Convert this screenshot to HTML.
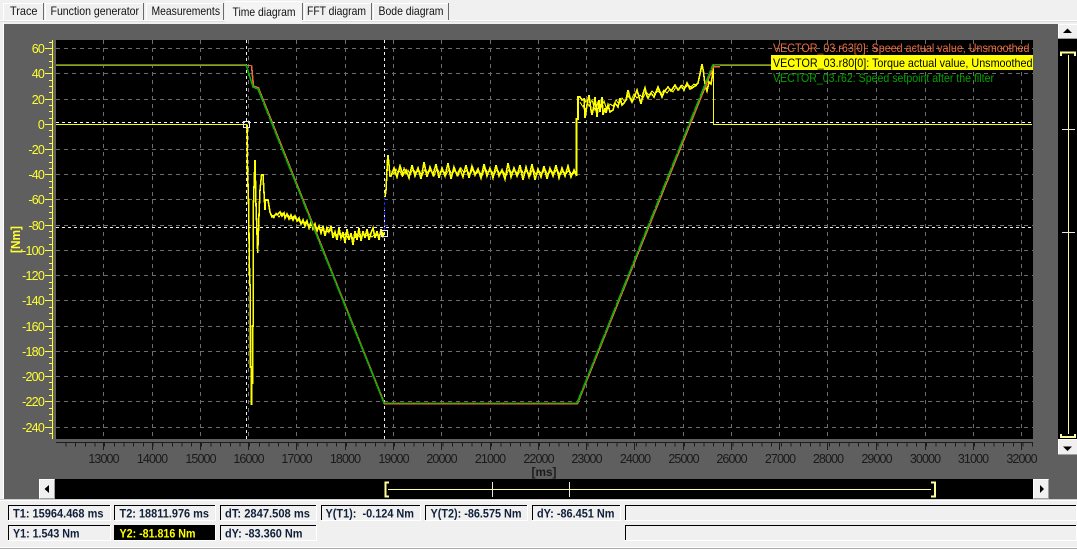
<!DOCTYPE html>
<html>
<head>
<meta charset="utf-8">
<style>
html,body{margin:0;padding:0;background:#f0f0f0;width:1077px;height:549px;overflow:hidden}
svg{display:block}
text{font-family:"Liberation Sans",sans-serif}
.tab{font-size:12px;fill:#111}
.yl{font-size:12.5px;fill:#ffff33;text-anchor:end;letter-spacing:-.8px}
.xl{font-size:12.5px;fill:#1a1a1a;text-anchor:middle;letter-spacing:-.9px}
.st{font-size:12px;font-weight:bold;fill:#10203a}
.lg{font-size:12px}
</style>
</head>
<body>
<svg width="1077" height="549" viewBox="0 0 1077 549" xmlns="http://www.w3.org/2000/svg">
<rect width="1077" height="549" fill="#f0f0f0"/>

<!-- tabs -->
<g shape-rendering="crispEdges">
<rect x="0" y="20" width="1077" height="1" fill="#ffffff"/>
<rect x="0" y="21" width="1077" height="1" fill="#dcdcdc"/>
<rect x="3" y="22" width="1" height="477" fill="#ffffff"/>
<path d="M43.5 3V20 M143.5 3V20 M223.5 3V20 M302.5 3V20 M371.5 3V20 M448.5 3V20" stroke="#6a6a6a" stroke-width="1.4"/>
<path d="M3.5 20V3.5H43 M45.5 20V3.5H143 M146.5 20V3.5H223 M304.5 20V3.5H371 M373.5 20V3.5H448" stroke="#ffffff" fill="none"/>
<rect x="225" y="1" width="77" height="21" fill="#f4f4f4"/>
<rect x="225" y="1" width="77" height="1" fill="#ffffff"/>
</g>
<text class="tab" x="10" y="15" textLength="27.5" lengthAdjust="spacingAndGlyphs">Trace</text>
<text class="tab" x="50.5" y="15" textLength="88.5" lengthAdjust="spacingAndGlyphs">Function generator</text>
<text class="tab" x="151.5" y="15" textLength="68.5" lengthAdjust="spacingAndGlyphs">Measurements</text>
<text class="tab" x="232.5" y="16" textLength="63" lengthAdjust="spacingAndGlyphs">Time diagram</text>
<text class="tab" x="307" y="15" textLength="59" lengthAdjust="spacingAndGlyphs">FFT diagram</text>
<text class="tab" x="378.5" y="15" textLength="65" lengthAdjust="spacingAndGlyphs">Bode diagram</text>

<!-- gray surface -->
<rect x="4" y="24" width="1054" height="475" fill="#5f5f5f" shape-rendering="crispEdges"/>
<rect x="1058" y="455" width="19" height="44" fill="#5f5f5f" shape-rendering="crispEdges"/>
<rect x="0" y="499" width="1077" height="1" fill="#cfcfcf" shape-rendering="crispEdges"/>
<rect x="0" y="500" width="1077" height="1" fill="#ffffff" shape-rendering="crispEdges"/>
<rect x="0" y="548" width="1077" height="1" fill="#a8a8a8" shape-rendering="crispEdges"/>
<rect x="0" y="547" width="1077" height="1" fill="#ffffff" shape-rendering="crispEdges"/>

<!-- plot -->
<rect x="56" y="40" width="977" height="399" fill="#000" shape-rendering="crispEdges"/>
<g shape-rendering="crispEdges" fill="none">
<path stroke="#6e6e6e" stroke-width="1" stroke-dasharray="4 4" d="M103.5 40V439M152.5 40V439M200.5 40V439M248.5 40V439M296.5 40V439M345.5 40V439M393.5 40V439M441.5 40V439M490.5 40V439M538.5 40V439M586.5 40V439M634.5 40V439M683.5 40V439M731.5 40V439M779.5 40V439M827.5 40V439M876.5 40V439M925.5 40V439M973.5 40V439M1021.5 40V439"/>
<path stroke="#6e6e6e" stroke-width="1" stroke-dasharray="4 4" d="M56 48.5H1033M56 73.5H1033M56 99.5H1033M56 149.5H1033M56 174.5H1033M56 199.5H1033M56 225.5H1033M56 250.5H1033M56 275.5H1033M56 300.5H1033M56 326.5H1033M56 351.5H1033M56 376.5H1033M56 401.5H1033M56 427.5H1033"/>
</g>

<!-- cursors -->
<g shape-rendering="crispEdges" fill="none" stroke="#f2f2f2" stroke-width="1" stroke-dasharray="3 3">
<path d="M246.5 40V439"/>
<path d="M384.5 40V439"/>
<path d="M56 122.5H1033"/>
<path d="M56 227.5H1033"/>
</g>

<!-- torque -->
<g fill="none" stroke="#ffff00" stroke-width="1" shape-rendering="crispEdges">
<path d="M56 124.5H247"/>
<path d="M713.5 65V124.5H1032"/>
</g>
<g fill="none" stroke="#ffff00" stroke-width="1.6" shape-rendering="crispEdges">
<path d="M247 124.5L247.5 170L248.5 200L249.7 285H250.3V367H251.5V405V367H252.5V384V326H253.3V207L255 160L256 205L257.7 253L259 215L260 190L261.5 175L263 175L265 210L265.5 200L268 200L270 212L272 217L275 215L278 214L280 212L282 216L284 213L285 218L287 214L289 219L291 215L293 220L295 216L297 221L299 218L301 224L303 220L305 226L307 221L309 228L311 222L313 229L315 224L317 231L319 226L321 233L323 226L325 236L327 228L329 232L331 226L333 238L335 232L337 240L339 228L341 238L343 232L345 243L347 229L349 240L351 233L353 245L355 231L357 240L359 228L361 241L363 231L365 238L367 229L369 240L371 233L373 228L375 238L377 231L379 240L381 229L383 236L384.5 232"/>
<path d="M385 197L386 190L387.5 160L388 155L389 165L390 176L391 176L394 168L397 177L400 166L403 175L406 170L409 178L412 165L415 176L418 168L421 179L424 162L427 177L430 167L433 175L436 164L439 178L442 168L445 176L448 163L451 179L454 167L457 175L460 169L463 177L466 165L469 178L472 166L475 175L478 169L481 178L484 164L487 176L490 168L493 178L496 165L499 176L502 170L505 179L508 163L511 177L514 168L517 176L520 165L523 180L526 167L529 177L532 164L535 180L538 169L541 177L544 166L547 179L550 168L553 176L556 165L559 178L562 168L565 176L568 166L571 177L574 170L576.5 176V119H578V97L580 97L582 100L584 99L585 118L587 105L589 95L591 110L592 115L594 105L595 97L597 117L599 100L600 112L602 97L603 115L605 108L606 113L608 105L610 112L613 110L615 103L618 107L620 98L622 105L624 103L626 100L628 90L630 98L632 102L634 98L637 90L639 97L641 104L643 94L645 88L647 96L648 98L651 93L654 97L658 87L660 92L662 97L664 92L668 87L671 91L675 85L678 90L681 86L684 90L687 83L690 89L692 88L695 86L698 83L700 74L702 64L703.5 72L705 85L707 91L709 82L711 84L712 78L713 67"/>
</g>
<g fill="none" stroke="#ffff00" stroke-width="1" shape-rendering="crispEdges">
<path d="M272 215L274 218L276 213L279 217L282 213L285 216L288 215L291 219L294 216L297 219L300 222L303 223L306 222L309 226L312 225L315 229L318 228L321 230L324 231L327 232L330 230L333 233L336 235L339 234L342 237L345 234L348 238L351 236L354 239L357 234L360 237L363 235L366 236L369 234L372 237L375 234L378 236L381 233L384 235"/>
<path d="M392 171L394 174L396 169L398 173L400 171L402 176L404 168L406 174L408 170L410 175L413 169L416 173L419 170L422 176L425 169L428 173L431 170L434 176L437 168L440 174L443 170L446 175L449 169L452 174L455 170L458 176L461 168L464 173L467 170L470 175L473 169L476 174L479 171L482 176L485 168L488 173L491 170L494 175L497 169L500 174L503 171L506 176L509 169L512 173L515 170L518 175L521 169L524 174L527 170L530 176L533 168L536 175L539 171L542 174L545 169L548 175L551 170L554 174L557 169L560 175L563 171L566 174L569 170L572 175L575 172"/>
<path d="M580 102L583 107L586 100L589 106L592 100L595 110L598 102L601 108L604 101L607 110L610 104L613 106L616 100L619 104L622 98L625 102L628 96L631 100L634 94L637 98L640 95L643 98L646 92L649 95L652 91L655 94L658 91L661 94L664 90L667 93L670 89L673 92L676 87L679 90L682 85L685 88L688 85L691 87L694 84L697 86"/>
</g>
<path fill="none" stroke="#2020ff" stroke-width="1.2" stroke-dasharray="3 2" shape-rendering="crispEdges" d="M384.5 197V231"/>

<!-- speed -->
<path fill="none" stroke="#f0693a" stroke-width="1" shape-rendering="crispEdges" d="M56 65.5H251.5M720 65.5H1033"/>
<path fill="none" stroke="#f0693a" stroke-width="1.6" shape-rendering="crispEdges" d="M251.5 65.5L253.5 86L258.5 88L384.5 403.5H577.5L713.5 66.5H720"/>
<path fill="none" stroke="#00b000" stroke-width="1.6" stroke-dasharray="14 1" shape-rendering="crispEdges" d="M258 89L384 403"/>
<path fill="none" stroke="#00b000" stroke-width="1" stroke-dasharray="14 1" shape-rendering="crispEdges" d="M384 403H577"/>
<path fill="none" stroke="#00b000" stroke-width="1.6" stroke-dasharray="14 1" shape-rendering="crispEdges" d="M577 403L713 64.5"/>
<path fill="none" stroke="#00b000" stroke-width="1" shape-rendering="crispEdges" d="M56 64.5H246M713 64.5H1033"/>
<path fill="none" stroke="#00b000" stroke-width="1.6" shape-rendering="crispEdges" d="M246 64.5L253 87L258 89"/>

<!-- legend -->
<rect x="771" y="55" width="262" height="15" fill="#ffff00" shape-rendering="crispEdges"/>
<text class="lg" x="773" y="52" fill="#f0693a" textLength="256.5" lengthAdjust="spacingAndGlyphs">VECTOR_03.r63[0]: Speed actual value, Unsmoothed</text>
<text class="lg" x="773" y="67" fill="#000" textLength="259.5" lengthAdjust="spacingAndGlyphs">VECTOR_03.r80[0]: Torque actual value, Unsmoothed</text>
<text class="lg" x="773" y="82" fill="#00a400" textLength="221" lengthAdjust="spacingAndGlyphs">VECTOR_03.r62: Speed setpoint after the filter</text>

<!-- markers -->
<rect x="243.5" y="121.5" width="6" height="6" fill="none" stroke="#e8e8e8" stroke-width="1" shape-rendering="crispEdges"/>
<rect x="381.5" y="230.5" width="6" height="6" fill="none" stroke="#e8e8e8" stroke-width="1" shape-rendering="crispEdges"/>

<!-- y axis -->
<g shape-rendering="crispEdges" fill="none" stroke="#ffff33">
<path d="M52.5 40V439" stroke-width="1"/>
<path stroke-width="1" d="M45 48.5H52M45 73.5H52M45 99.5H52M45 124.5H52M45 149.5H52M45 174.5H52M45 199.5H52M45 225.5H52M45 250.5H52M45 275.5H52M45 300.5H52M45 326.5H52M45 351.5H52M45 376.5H52M45 401.5H52M45 427.5H52"/>
<path stroke-width="1" d="M49 42.5H52M49 54.5H52M49 61.5H52M49 67.5H52M49 80.5H52M49 86.5H52M49 92.5H52M49 105.5H52M49 111.5H52M49 118.5H52M49 130.5H52M49 136.5H52M49 143.5H52M49 155.5H52M49 162.5H52M49 168.5H52M49 181.5H52M49 187.5H52M49 193.5H52M49 206.5H52M49 212.5H52M49 218.5H52M49 231.5H52M49 237.5H52M49 244.5H52M49 256.5H52M49 263.5H52M49 269.5H52M49 282.5H52M49 288.5H52M49 294.5H52M49 307.5H52M49 313.5H52M49 319.5H52M49 332.5H52M49 338.5H52M49 345.5H52M49 357.5H52M49 363.5H52M49 370.5H52M49 382.5H52M49 389.5H52M49 395.5H52M49 408.5H52M49 414.5H52M49 420.5H52M49 433.5H52"/>
</g>
<text class="yl" x="44" y="53">60</text>
<text class="yl" x="44" y="78">40</text>
<text class="yl" x="44" y="104">20</text>
<text class="yl" x="44" y="129">0</text>
<text class="yl" x="44" y="154">-20</text>
<text class="yl" x="44" y="179">-40</text>
<text class="yl" x="44" y="204">-60</text>
<text class="yl" x="44" y="230">-80</text>
<text class="yl" x="44" y="255">-100</text>
<text class="yl" x="44" y="280">-120</text>
<text class="yl" x="44" y="305">-140</text>
<text class="yl" x="44" y="331">-160</text>
<text class="yl" x="44" y="356">-180</text>
<text class="yl" x="44" y="381">-200</text>
<text class="yl" x="44" y="406">-220</text>
<text class="yl" x="44" y="432">-240</text>
<text x="0" y="0" transform="translate(20,253) rotate(-90)" font-size="13" font-weight="bold" fill="#ffff33" textLength="27" lengthAdjust="spacingAndGlyphs">[Nm]</text>

<!-- x axis -->
<g shape-rendering="crispEdges" fill="none" stroke="#1c1c1c">
<path d="M56 442.5H1033" stroke-width="1"/>
<path stroke-dasharray="1 8.667" d="M65.5 444.5H1033" style="stroke-width:4"/>
<path stroke-width="1" d="M103.5 442V450M152.5 442V450M200.5 442V450M248.5 442V450M296.5 442V450M345.5 442V450M393.5 442V450M441.5 442V450M490.5 442V450M538.5 442V450M586.5 442V450M634.5 442V450M683.5 442V450M731.5 442V450M779.5 442V450M827.5 442V450M876.5 442V450M925.5 442V450M973.5 442V450M1021.5 442V450"/>
</g>
<text class="xl" x="103.5" y="463">13000</text>
<text class="xl" x="152" y="463">14000</text>
<text class="xl" x="200.5" y="463">15000</text>
<text class="xl" x="248.5" y="463">16000</text>
<text class="xl" x="296.5" y="463">17000</text>
<text class="xl" x="345" y="463">18000</text>
<text class="xl" x="393.5" y="463">19000</text>
<text class="xl" x="441.5" y="463">20000</text>
<text class="xl" x="490" y="463">21000</text>
<text class="xl" x="538.5" y="463">22000</text>
<text class="xl" x="586.5" y="463">23000</text>
<text class="xl" x="635" y="463">24000</text>
<text class="xl" x="683.5" y="463">25000</text>
<text class="xl" x="731.5" y="463">26000</text>
<text class="xl" x="780" y="463">27000</text>
<text class="xl" x="828" y="463">28000</text>
<text class="xl" x="876.5" y="463">29000</text>
<text class="xl" x="925" y="463">30000</text>
<text class="xl" x="973" y="463">31000</text>
<text class="xl" x="1021.5" y="463">32000</text>
<text x="531.5" y="476" font-size="12" font-weight="bold" fill="#1c1c1c" textLength="25" lengthAdjust="spacingAndGlyphs">[ms]</text>

<!-- horizontal scrollbar -->
<g shape-rendering="crispEdges">
<rect x="55" y="479" width="978" height="20" fill="#000"/>
<rect x="39" y="479" width="16" height="20" fill="#f0f0f0"/>
<path d="M39.5 498V479.5H54.5" fill="none" stroke="#fff"/>
<path d="M54.5 479.5V498.5H39.5" fill="none" stroke="#a0a0a0"/>
<rect x="1033" y="479" width="16" height="20" fill="#f0f0f0"/>
<path d="M1033.5 498V479.5H1048.5" fill="none" stroke="#fff"/>
<path d="M1048.5 479.5V498.5H1033.5" fill="none" stroke="#a0a0a0"/>
<path d="M388 489.5H931" stroke="#ffff99" stroke-width="1" fill="none"/>
<path d="M389 482.5H385.5V496.5H389" stroke="#ffff99" stroke-width="2" fill="none"/>
<path d="M931 482.5H935V496.5H931" stroke="#ffff99" stroke-width="2" fill="none"/>
<path d="M492.5 482V497M569.5 482V497" stroke="#e8e8e8" stroke-width="1"/>
</g>
<path d="M44.5 489L49 485V493Z" fill="#000"/>
<path d="M1044 489L1040 485V493Z" fill="#000"/>

<!-- vertical scrollbar -->
<g shape-rendering="crispEdges">
<rect x="1058" y="39" width="19" height="400" fill="#000"/>
<rect x="1058" y="24" width="19" height="15" fill="#f0f0f0"/>
<path d="M1058.5 39V24.5H1077" fill="none" stroke="#fff"/>
<rect x="1058" y="38" width="19" height="1" fill="#a0a0a0"/>
<rect x="1058" y="439" width="19" height="16" fill="#f0f0f0"/>
<path d="M1058.5 455V439.5H1077" fill="none" stroke="#fff"/>
<rect x="1058" y="454" width="19" height="1" fill="#a0a0a0"/>
<path d="M1068.5 55V434" stroke="#ffff99" stroke-width="1" fill="none"/>
<path d="M1061 56V52.5H1075V56" stroke="#ffff99" stroke-width="2" fill="none"/>
<path d="M1061 434V437H1075V434" stroke="#ffff99" stroke-width="2" fill="none"/>
<path d="M1062 129.5H1075M1062 232.5H1075" stroke="#e8e8e8" stroke-width="1" fill="none"/>
</g>
<path d="M1067.5 28.5L1072 33H1063Z" fill="#000"/>
<path d="M1067.5 451L1063 446.5H1072Z" fill="#000"/>

<!-- status boxes -->
<g shape-rendering="crispEdges" fill="none">
<g stroke="#000">
<path d="M8.5 520V505.5H110"/><path d="M114.5 520V505.5H215"/><path d="M220.5 520V505.5H316"/><path d="M321.5 520V505.5H420"/><path d="M425.5 520V505.5H527"/><path d="M532.5 520V505.5H620"/><path d="M625.5 520V505.5H1076"/>
<path d="M8.5 540V525.5H110"/><path d="M220.5 540V525.5H316"/><path d="M625.5 540V525.5H1076"/>
</g>
<g stroke="#fff">
<path d="M8 520.5H110.5V505"/><path d="M114 520.5H215.5V505"/><path d="M220 520.5H316.5V505"/><path d="M321 520.5H420.5V505"/><path d="M425 520.5H527.5V505"/><path d="M532 520.5H620.5V505"/><path d="M625 520.5H1076.5V505"/>
<path d="M8 540.5H110.5V525"/><path d="M114 540.5H215.5V525"/><path d="M220 540.5H316.5V525"/><path d="M625 540.5H1076.5V525"/>
</g>
<rect x="114" y="525" width="101" height="15" fill="#000" stroke="none"/>
</g>
<text class="st" x="13" y="517.5" textLength="90.5" lengthAdjust="spacingAndGlyphs">T1: 15964.468 ms</text>
<text class="st" x="119.5" y="517.5" textLength="89.5" lengthAdjust="spacingAndGlyphs">T2: 18811.976 ms</text>
<text class="st" x="225" y="517.5" textLength="85" lengthAdjust="spacingAndGlyphs">dT: 2847.508 ms</text>
<text class="st" x="325.5" y="517.5" textLength="88.5" lengthAdjust="spacingAndGlyphs" xml:space="preserve">Y(T1):  -0.124 Nm</text>
<text class="st" x="430.5" y="517.5" textLength="91" lengthAdjust="spacingAndGlyphs">Y(T2): -86.575 Nm</text>
<text class="st" x="537" y="517.5" textLength="77.5" lengthAdjust="spacingAndGlyphs">dY: -86.451 Nm</text>
<text class="st" x="13" y="537.5" textLength="66.5" lengthAdjust="spacingAndGlyphs">Y1: 1.543 Nm</text>
<text class="st" x="119.5" y="537.5" textLength="76" lengthAdjust="spacingAndGlyphs" style="fill:#ffff00">Y2: -81.816 Nm</text>
<text class="st" x="225" y="537.5" textLength="77.5" lengthAdjust="spacingAndGlyphs">dY: -83.360 Nm</text>
</svg>
</body>
</html>
